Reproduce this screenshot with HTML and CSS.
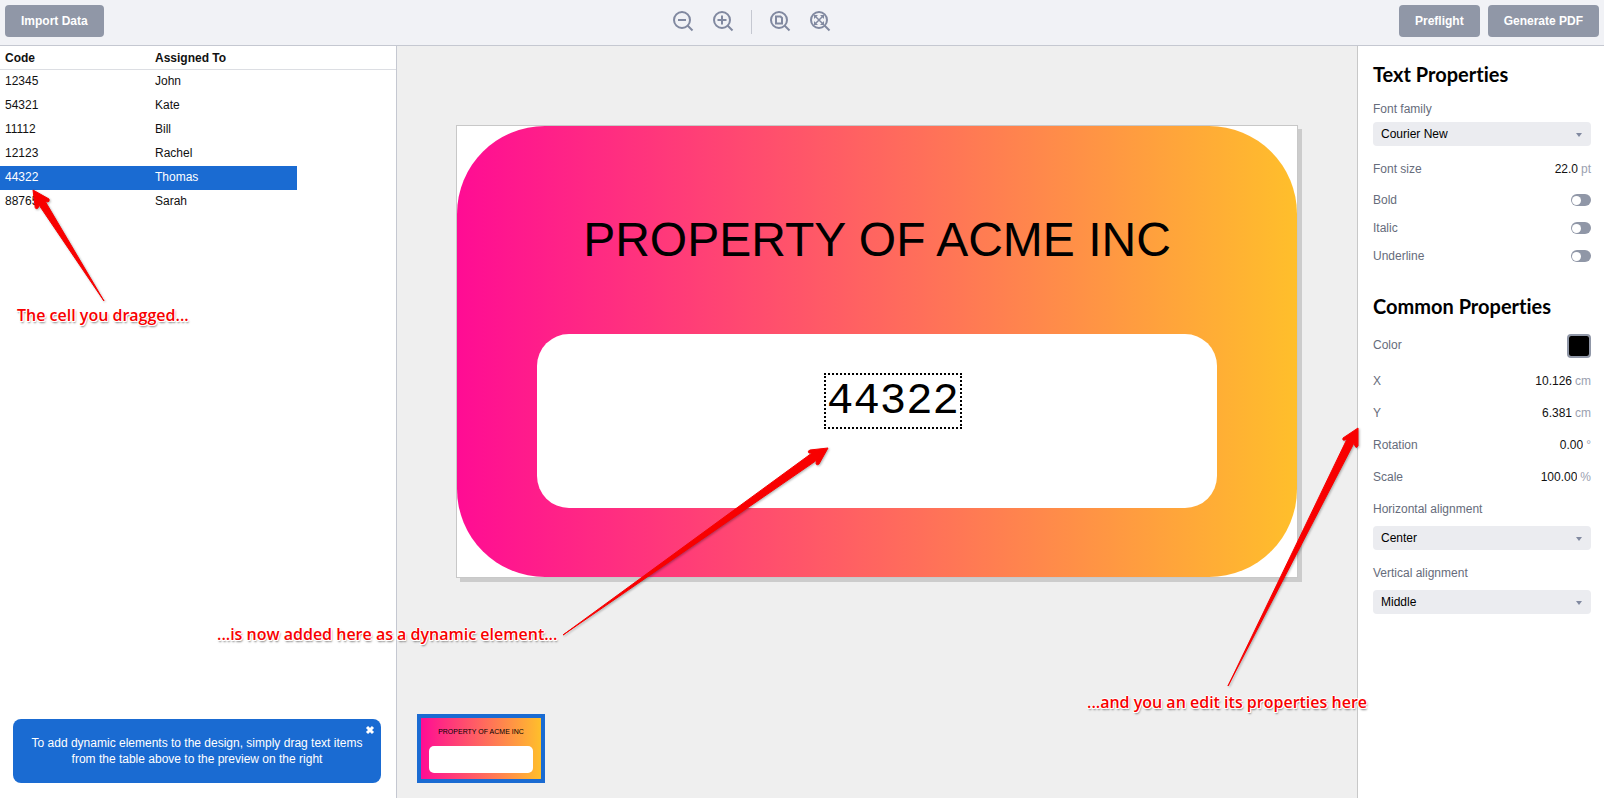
FILE: index.html
```html
<!DOCTYPE html>
<html lang="en">
<head>
    <meta charset="UTF-8">
    <meta name="viewport" content="width=device-width, initial-scale=1.0">
    <title>Label Designer</title>
    <link rel="stylesheet" href="styles.css">
</head>
<body>
    <header class="toolbar">
        <button type="button" class="btn">Import Data</button>
        <div class="zoom-tools">
            <button type="button" class="icon-btn" aria-label="Zoom out">
                <svg viewBox="-1 0 24 24"><circle cx="10" cy="10" r="8"/><path d="M15.500 15.500l5 5"/><path d="M6 10h8"/></svg>
            </button>
            <button type="button" class="icon-btn" aria-label="Zoom in">
                <svg viewBox="-1 0 24 24"><circle cx="10" cy="10" r="8"/><path d="M15.500 15.500l5 5"/><path d="M5.500 10h9M10 5.500v9"/></svg>
            </button>
            <span class="divider"></span>
            <button type="button" class="icon-btn" aria-label="Fit page">
                <svg viewBox="-1 0 24 24"><circle cx="10" cy="10" r="8"/><path d="M15.500 15.500l5 5"/><path d="M7 6.500h4.500l1.500 1.500v5.500H7z"/></svg>
            </button>
            <button type="button" class="icon-btn" aria-label="Fit all">
                <svg viewBox="-1 0 24 24"><circle cx="10" cy="10" r="8"/><path d="M15.500 15.500l5 5"/><path class="thin" d="M6 6l8 8M14 6l-8 8"/><path class="tips" d="M5 5h4l-4 4zM15 5v4l-4-4zM15 15h-4l4-4zM5 15v-4l4 4z"/></svg>
            </button>
        </div>
        <div class="actions">
            <button type="button" class="btn">Preflight</button>
            <button type="button" class="btn">Generate PDF</button>
        </div>
    </header>

    <main class="workspace">
        <aside class="data-panel">
            <div class="table-wrap">
                <table class="data-table">
                    <thead>
                        <tr><th>Code</th><th>Assigned To</th></tr>
                    </thead>
                    <tbody>
                        <tr><td>12345</td><td>John</td></tr>
                        <tr><td>54321</td><td>Kate</td></tr>
                        <tr><td>11112</td><td>Bill</td></tr>
                        <tr><td>12123</td><td>Rachel</td></tr>
                        <tr class="selected"><td>44322</td><td>Thomas</td></tr>
                        <tr><td>88765</td><td>Sarah</td></tr>
                    </tbody>
                </table>
            </div>
            <div class="tip">
                <button type="button" class="tip-close" aria-label="Close">
                    <svg viewBox="0 0 10 10"><path d="M2 2l6 6M8 2l-6 6"/></svg>
                </button>
                <p>To add dynamic elements to the design, simply drag text items from the table above to the preview on the right</p>
            </div>
        </aside>

        <section class="canvas">
            <div class="page">
                <div class="label-card">
                    <h1 class="label-title">PROPERTY OF ACME INC</h1>
                    <div class="label-field">
                        <div class="dynamic-text">44322</div>
                    </div>
                </div>
            </div>
            <div class="thumbs">
                <button type="button" class="thumb">
                    <span class="thumb-title">PROPERTY OF ACME INC</span>
                    <span class="thumb-field"></span>
                </button>
            </div>
        </section>

        <aside class="props-panel">
            <h2>Text Properties</h2>
            <div class="select-row compact">
                <label for="fontFamily">Font family</label>
                <div class="select-box">
                    <select id="fontFamily"><option>Courier New</option></select>
                </div>
            </div>
            <div class="row size-row">
                <label for="fontSize">Font size</label>
                <input type="text" id="fontSize" value="22.0"><span class="unit">pt</span>
            </div>
            <div class="row toggle-row">
                <label for="bold">Bold</label>
                <input type="checkbox" id="bold" class="toggle">
            </div>
            <div class="row toggle-row">
                <label for="italic">Italic</label>
                <input type="checkbox" id="italic" class="toggle">
            </div>
            <div class="row toggle-row">
                <label for="underline">Underline</label>
                <input type="checkbox" id="underline" class="toggle">
            </div>

            <h2>Common Properties</h2>
            <div class="row color-row">
                <label for="color">Color</label>
                <input type="color" id="color" class="swatch" value="#000000">
            </div>
            <div class="row">
                <label for="posX">X</label>
                <input type="text" id="posX" value="10.126"><span class="unit">cm</span>
            </div>
            <div class="row">
                <label for="posY">Y</label>
                <input type="text" id="posY" value="6.381"><span class="unit">cm</span>
            </div>
            <div class="row">
                <label for="rotation">Rotation</label>
                <input type="text" id="rotation" value="0.00"><span class="unit">°</span>
            </div>
            <div class="row">
                <label for="scale">Scale</label>
                <input type="text" id="scale" value="100.00"><span class="unit">%</span>
            </div>
            <div class="select-row">
                <label for="hAlign">Horizontal alignment</label>
                <div class="select-box">
                    <select id="hAlign"><option>Center</option></select>
                </div>
            </div>
            <div class="select-row">
                <label for="vAlign">Vertical alignment</label>
                <div class="select-box">
                    <select id="vAlign"><option>Middle</option></select>
                </div>
            </div>
        </aside>
    </main>

    <!-- Callouts on top of the editor -->
    <div class="note note-cell">
        <svg class="arrow" width="75" height="115" viewBox="0 0 75 115"><path d="M2 2L18 11Q19 14 16 14L14 13L73 113L8 17L7 20Q4 22 4 18Z"/></svg>
        <p>The cell you dragged...</p>
    </div>
    <div class="note note-element">
        <svg class="arrow" width="270" height="192" viewBox="0 0 270 192"><path d="M268 3L259 19Q256 21 256 18L257 15L3 190L252 8L249 8Q247 6 250 5Z"/></svg>
        <p>...is now added here as a dynamic element...</p>
    </div>
    <div class="note note-props">
        <svg class="arrow" width="134" height="262" viewBox="0 0 134 262"><path d="M132 2L132 20Q130 23 129 20L128 17L2 260L121 13L119 14Q116 15 117 12Z"/></svg>
        <p>...and you an edit its properties here</p>
    </div>
</body>
</html>
```

FILE: styles.css
```css
* {
    box-sizing: border-box;
}

body {
    font-family: "Liberation Sans", Arial, sans-serif;
    font-size: 12px;
    line-height: 16px;
    margin: 0;
    height: 100vh;
    display: flex;
    flex-direction: column;
    position: relative;
    overflow: hidden;
    color: #111;
    background-color: #fff;
}

button, input, select {
    font-family: inherit;
    font-size: inherit;
    margin: 0;
    padding: 0;
    border: none;
    background: none;
    color: inherit;
}

button {
    cursor: pointer;
}

/* Toolbar */
.toolbar {
    display: flex;
    justify-content: space-between;
    align-items: flex-start;
    padding: 5px 5px 6px;
    background-color: #f1f2f6;
    border-bottom: 1px solid #c5c8d1;
}

.btn {
    height: 32px;
    padding: 0 16px;
    border-radius: 4px;
    background-color: #9097a7;
    color: #fff;
    font-weight: bold;
}

.actions {
    display: flex;
    gap: 8px;
}

.zoom-tools {
    display: flex;
    align-items: center;
    gap: 16px;
    height: 34px;
}

.icon-btn {
    width: 24px;
    height: 24px;
}

.icon-btn svg {
    display: block;
    width: 24px;
    height: 24px;
    fill: none;
    stroke: #8189a0;
    stroke-width: 2;
}

.icon-btn .thin {
    stroke-width: 1.500;
}

.icon-btn .tips {
    fill: #8189a0;
    stroke: none;
}

.divider {
    width: 1px;
    height: 24px;
    background-color: #c5c8d1;
}

/* Columns */
.workspace {
    flex: 1;
    display: flex;
    min-height: 0;
}

.data-panel {
    width: 397px;
    display: flex;
    flex-direction: column;
    justify-content: space-between;
    border-right: 1px solid #c5c8d1;
}

.data-table {
    width: 297px;
    table-layout: fixed;
    border-collapse: collapse;
}

.table-wrap {
    background: linear-gradient(#dcdee3, #dcdee3) 0 23px / 100% 1px no-repeat;
}

.data-table th, .data-table td {
    height: 24px;
    padding: 0 5px;
    text-align: left;
}

.data-table td {
    padding-bottom: 2px;
}

.data-table th:first-child {
    width: 150px;
}

.data-table .selected {
    background-color: #1a6bd2;
    color: #fff;
}

.tip {
    position: relative;
    margin: 0 15px 15px 13px;
    padding: 16px;
    border-radius: 8px;
    background-color: #1a6bd2;
    color: #fff;
    text-align: center;
}

.tip p {
    margin: 0;
}

.tip-close {
    position: absolute;
    top: 6px;
    right: 6px;
    width: 10px;
    height: 10px;
}

.tip-close svg {
    display: block;
    stroke: #fff;
    stroke-width: 3;
}

/* Preview */
.canvas {
    flex: 1;
    display: flex;
    flex-direction: column;
    justify-content: space-between;
    background-color: #efefef;
}

.page {
    margin: 79px 59px 0;
    border: 1px solid #c8c8c8;
    background-color: #fff;
    box-shadow: 4px 4px 0 #ccc;
}

.label-card {
    padding: 0 80px 69px;
    border-radius: 88px;
    background: linear-gradient(90deg, #ff0c94, #ffbf2b);
}

.label-title {
    margin: 0;
    padding-top: 20px;
    color: #000;
    font-size: 48px;
    font-weight: normal;
    line-height: 188px;
    text-align: center;
    white-space: nowrap;
}

.label-field {
    position: relative;
    height: 174px;
    border-radius: 32px;
    background-color: #fff;
}

.dynamic-text {
    position: absolute;
    left: 287px;
    top: 39px;
    padding: 1px 1px 0;
    border: 2px dotted #000;
    color: #000;
    font-family: "Courier New", "Liberation Mono", monospace;
    font-size: 44px;
    line-height: 51px;
}

.thumbs {
    padding: 0 20px 15px;
}

.thumb {
    display: flex;
    flex-direction: column;
    width: 128px;
    height: 69px;
    padding: 9px 8px 0;
    border: 4px solid #1a6bd2;
    background: linear-gradient(90deg, #ff0c94, #ffbf2b);
    color: #000;
}

.thumb-title {
    font-size: 7px;
    line-height: 10px;
    text-align: center;
    align-self: stretch;
}

.thumb-field {
    align-self: stretch;
    height: 27px;
    margin-top: 9px;
    border-radius: 5px;
    background-color: #fff;
}

/* Properties */
.props-panel {
    width: 247px;
    padding: 16px 13px 0 15px;
    border-left: 1px solid #c8c8c8;
}

.props-panel h2 {
    margin: 0 0 11px;
    color: #000;
    font-family: "Gill Sans", Lato, sans-serif;
    font-size: 20px;
    font-weight: bold;
    font-variant-ligatures: none;
    line-height: 24px;
}

.toggle-row + h2 {
    margin-top: 24px;
}

.props-panel label {
    color: #666c7b;
}

.row {
    display: flex;
    align-items: center;
    height: 32px;
}

.row input[type="text"] {
    flex: 1;
    min-width: 0;
    text-align: right;
}

.unit {
    margin-left: 3px;
    color: #9ba1b0;
}

.size-row {
    margin-bottom: 1px;
}

.toggle-row {
    height: 28px;
    justify-content: space-between;
}

.toggle {
    appearance: none;
    display: flex;
    align-items: center;
    width: 20px;
    height: 12px;
    padding: 0 1px;
    border-radius: 6px;
    background-color: #9097a7;
}

.toggle::before {
    content: "";
    width: 9px;
    height: 9px;
    border-radius: 50%;
    background-color: #fff;
}

.toggle:checked {
    justify-content: flex-end;
    background-color: #1a6bd2;
}

.color-row {
    justify-content: space-between;
    margin-bottom: 4px;
}

.swatch {
    appearance: none;
    width: 24px;
    height: 24px;
    margin-top: 2px;
    border: 2px solid #9097a7;
    border-radius: 4px;
    background-color: #000;
}

.swatch::-webkit-color-swatch-wrapper {
    padding: 0;
}

.swatch::-webkit-color-swatch {
    border: none;
}

.select-row {
    padding-bottom: 7px;
}

.select-row label {
    display: block;
    margin-bottom: 1px;
    line-height: 32px;
}

.compact label {
    line-height: 24px;
}

.select-box {
    position: relative;
}

.select-box select {
    appearance: none;
    display: block;
    width: 100%;
    height: 24px;
    padding: 0 8px;
    border-radius: 4px;
    background-color: #ebecf0;
    color: #000;
}

.select-box::after {
    content: "";
    position: absolute;
    right: 9px;
    top: 11px;
    border: 3px solid transparent;
    border-top: 4px solid #8189a0;
    border-bottom: none;
    pointer-events: none;
}

/* Callouts */
.note {
    position: absolute;
    color: #f80000;
    font-family: "Open Sans", "Noto Sans", sans-serif;
    font-size: 16px;
    font-weight: 600;
    line-height: 24px;
    white-space: nowrap;
    pointer-events: none;
}

.note p {
    margin: 0;
    text-shadow: 1px 0 #fff, -1px 0 #fff, 0 1px #fff, 0 -1px #fff, 1px 1px #fff, -1px 1px #fff, 1px 2px 2px #777;
}

.arrow {
    display: block;
    fill: #f80000;
    stroke: #f80000;
    stroke-linejoin: round;
    filter: drop-shadow(1px 1px 1px rgba(0, 0, 0, 0.3));
}

.note-cell {
    left: 17px;
    top: 188px;
}

.note-cell .arrow {
    margin-left: 14px;
}

.note-element {
    left: 217px;
    top: 445px;
}

.note-element .arrow {
    margin-left: 343px;
    margin-bottom: -15px;
}

.note-props {
    right: 237px;
    top: 426px;
}

.note-props .arrow {
    margin-left: auto;
    margin-right: 7px;
    margin-bottom: 2px;
}
```
